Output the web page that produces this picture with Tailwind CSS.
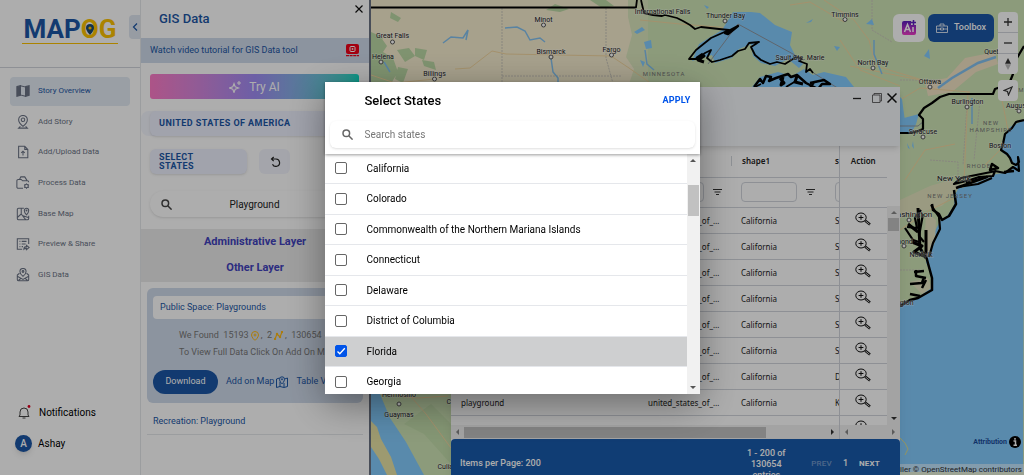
<!DOCTYPE html>
<html lang="en">
<head>
    <meta charset="UTF-8">
    <meta name="viewport" content="width=device-width, initial-scale=1.0">
    <title>MAPOG - GIS Data</title>
    <script src="https://cdn.jsdelivr.net/npm/@tailwindcss/browser@4"></script>
</head>
<body class="h-screen overflow-hidden bg-white font-['Roboto',sans-serif] text-[#222]">
    <div class="flex h-full">

        <!-- Sidebar -->
        <aside class="relative flex w-[140px] shrink-0 flex-col">
            <div class="flex h-[68px] items-start justify-center border-b border-gray-300 pt-[14px]">
                <div class="relative h-[30px] border-b border-[#fcc200] px-[2px] text-[26px] leading-[30px] font-bold">
                    <span class="text-[#1b56a5]">MAP</span><span class="text-[#fcc200]">OG</span>
                    <svg class="absolute top-[10px] left-[64px] h-3 w-2" viewBox="0 0 8 12"><path d="M4 0a4 4 0 0 0-4 4c0 3 4 7 4 7s4-4 4-7a4 4 0 0 0-4-4z" fill="#1b4a70"/><circle cx="4" cy="4" r="1.6" fill="#fcc200"/></svg>
                </div>
            </div>
            <button class="absolute top-[15px] right-0 flex h-6 w-[11px] items-center justify-center rounded-l bg-[#dfe6f0]" aria-label="Collapse">
                <svg class="h-2 w-[6px]" viewBox="0 0 6 8" fill="none" stroke="#1b56a5" stroke-width="1.2"><path d="M5 .5 1.500 4 5 7.500"/></svg>
            </button>
            <nav id="nav" class="mt-2 grid h-[214px] grid-rows-7 px-[10px]"></nav>
            <div class="mt-auto flex flex-col gap-3 pb-[23px] pl-[15px] text-[10px] text-black">
                <a href="#" class="flex h-5 items-center gap-[7px]">
                    <svg class="h-4 w-[17px]" viewBox="0 0 17 16" fill="none" stroke="#444" stroke-width="1"><path d="M5 11V8a4 4 0 0 1 8 0v3l1 1.500H4zM7.500 14h3"/><circle cx="14" cy="2.500" r="1.400" fill="#e00020" stroke="none"/></svg>
                    Notifications
                </a>
                <a href="#" class="flex h-[18px] items-center gap-[6px]">
                    <span class="flex size-[17px] items-center justify-center rounded-full bg-[#1b56a5] font-medium text-white shadow-md">A</span>
                    Ashay
                </a>
            </div>
        </aside>

        <!-- GIS data panel -->
        <section class="relative w-[231px] shrink-0 border-r-2 border-l border-l-gray-200 border-r-gray-500 text-[#1b56a5]">
            <button class="absolute top-[3px] right-1 flex size-3 items-center justify-center" aria-label="Close">
                <svg class="size-2" viewBox="0 0 8 8" stroke="#111" stroke-width="1.200"><path d="M.5.5l7 7M7.500.5l-7 7"/></svg>
            </button>
            <h1 class="flex h-[38px] items-center pl-[18px] text-[13px] font-medium">GIS Data</h1>
            <div class="flex h-[25px] items-center justify-between bg-[#cfdaea] pr-[10px] pl-[9px] text-[9px]">
                Watch video tutorial for GIS Data tool
                <svg class="h-[13px] w-[13px]" viewBox="0 0 13 13"><rect width="13" height="10" rx="2" fill="#f00018"/><rect x="4" y="2.500" width="5" height="5" rx="1" fill="none" stroke="#fff"/><path d="M5.800 3.800l2 1.200-2 1.200z" fill="#fff"/><path d="M0 11.700h13" stroke="#f00018" stroke-width="1.300" stroke-dasharray="3 .6"/></svg>
            </div>
            <div class="pt-[11px] pr-[10px] pl-[9px]">
                <button class="flex h-[25px] w-full items-center justify-center gap-2 rounded-[3px] bg-linear-to-r from-[#ff7cc8] via-[#a08cf5] to-[#00e0c8] text-[12px] text-white">
                    <svg class="size-3" viewBox="0 0 12 12" fill="none" stroke="#fff" stroke-width="1.100"><path d="M5 2.500 6.200 5.800 9.500 7 6.200 8.200 5 11.500 3.800 8.200.5 7 3.800 5.800zM10 0v4M8 2h4"/></svg>
                    Try AI
                </button>
            </div>
            <div class="mt-3 h-[25px] rounded-lg bg-[#f4f6fe] pl-[9px]">
                <button class="flex h-full w-full items-center rounded-md bg-[#edf0fe] pl-[9px] text-[9px] font-bold tracking-wider shadow">UNITED STATES OF AMERICA</button>
            </div>
            <div class="mt-[13px] flex h-[25px] gap-3 pl-[9px]">
                <button class="w-[97px] rounded-md bg-[#edf0fe] pr-9 pl-[9px] text-left text-[9px] leading-[9px] font-bold tracking-wider shadow">SELECT STATES</button>
                <button class="flex w-[31px] items-center justify-center rounded-md bg-[#f2f4fc]" aria-label="Reset">
                    <svg class="size-3" viewBox="0 0 12 12" fill="none" stroke="#222" stroke-width="1.200"><path d="M3 3h4a3.700 3.700 0 1 1-3.500 5.200M4.700 1 2.500 3 4.700 5.200"/></svg>
                </button>
            </div>
            <div class="mt-[17px] pr-[10px] pl-[9px]">
                <div class="relative h-[26px] rounded-full bg-white shadow">
                    <svg class="absolute top-2 left-[11px] size-[11px]" viewBox="0 0 11 11" fill="none" stroke="#444" stroke-width="1.500"><circle cx="4.300" cy="4.300" r="3.300"/><path d="M7 7l3.600 3.600"/></svg>
                    <input type="text" value="Playground" aria-label="Search data" class="h-full w-full rounded-full text-center text-[10px] text-[#222]">
                </div>
            </div>
            <div class="mt-3 h-[53px] bg-[#ebebeb] text-center text-[11px] leading-[26px] font-bold text-[#4142bd]">
                <h2>Administrative Layer</h2>
                <h2>Other Layer</h2>
            </div>
            <div class="mx-[6px] mt-[6px] h-[115px] rounded-md bg-[#cfdaea] px-[6px] pt-2 text-[9px]">
                <h3 class="flex h-[23px] items-center rounded bg-white pl-[7px]">Public Space: Playgrounds</h3>
                <div class="mt-2 pl-[26px] leading-[17px] whitespace-nowrap text-[#777]">
                    <p class="flex items-center">We Found&nbsp; 15193
                        <svg class="mx-[2px] h-[10px] w-2" viewBox="0 0 8 10" fill="none" stroke="#fdb813"><path d="M4 .5A3.500 3.500 0 0 0 .5 4C.5 6.500 4 9.500 4 9.500S7.500 6.500 7.500 4A3.500 3.500 0 0 0 4 .5zM4 2.500v3M2.500 4h3"/></svg>,&nbsp; 2
                        <svg class="mx-[2px] size-[9px]" viewBox="0 0 9 9" fill="none" stroke="#fdb813" stroke-width="1.200"><path d="M1 8l2-5 3 3 2-5"/><circle cx="1" cy="8" r=".6"/><circle cx="3" cy="3" r=".6"/><circle cx="6" cy="6" r=".6"/><circle cx="8" cy="1" r=".6"/></svg>,&nbsp; 130654
                        <svg class="ml-[2px] size-[9px]" viewBox="0 0 9 9" fill="none" stroke="#fdb813"><path d="M1 5l3-4 4 2-1 5z"/></svg>
                    </p>
                    <p>To View Full Data Click On Add On Map</p>
                </div>
                <div class="mt-[9px] flex h-6 items-center gap-2">
                    <button class="h-full w-[65px] rounded-full bg-[#1b56a5] text-white">Download</button>
                    <button class="flex items-center gap-[2px] whitespace-nowrap">Add on Map
                        <svg class="size-3" viewBox="0 0 12 12" fill="none" stroke="#1b56a5"><path d="M3.500 2 .5 3v8.500l3.500-1 4 1 3.500-1V2L8.500 3M4 6v4.500M8 7v4"/><path d="M6 8S3.500 5.500 3.500 3.300a2.500 2.500 0 0 1 5 0C8.500 5.500 6 8 6 8z"/><circle cx="6" cy="3.300" r=".6"/></svg>
                    </button>
                    <button class="whitespace-nowrap">Table View</button>
                </div>
            </div>
            <h3 class="mx-[6px] flex h-8 items-center border-b border-gray-200 pt-[6px] pl-[6px] text-[9px]">Recreation: Playground</h3>
        </section>

        <!-- Map -->
        <main class="relative min-w-0 flex-1 overflow-hidden bg-[#84ccfe]">
            <svg class="absolute inset-0 h-full w-full" viewBox="371 0 653 475" preserveAspectRatio="xMinYMin slice">
                <rect x="371" width="653" height="475" fill="#cfe5b6"/>
                <path d="M371 0H640V87H371z" fill="#f6edcf"/>
                <path d="M628 0h20v87h-20l6-18-8-12 6-22-4-18z" fill="#dbe6bd"/>
                <g fill="#bcd9a5">
                    <path d="M555 4l14 5-9 3-14-2zM371 32l9 4 7 10-4 6 10 6 5 14-6 10 4 5h-25zM397 50l12-2 6 8-10 6zM415 48l12 2-3 10-9-4zM422 60l12 2 2 8-12-4zM398 67l10 2-5 14-8-4zM391 12l10 6-3 4-8-4z"/>
                    <path d="M374 35l9 3-4 7-8-3zM590 0h16l8 6-12 2z"/>
                </g>
                <g fill="#f2e3c4">
                    <path d="M925 82l22-4 18-20 30-6 3 12-22 8-24 20-24 4z"/>
                    <path d="M900 200l30-14 20-6 10 6-18 20-42 12z" opacity=".6"/>
                </g>
                <!-- state lines and roads -->
                <g fill="none" stroke="#c9c6bb" stroke-width="1">
                    <path d="M502 8v79M502 76h120M606 8v50l8 29M900 80h40M930 160l28 2v30M967 105l-4 60M980 100l-6 60M900 270h22M872 0v30l20 12" stroke-dasharray="2 1"/>
                </g>
                <g fill="none" stroke="#f2d6a0" stroke-width="1">
                    <path d="M455 69l15-1 22-17 14 3 105 2 18 12 20 14M371 75l24 8 40-4M640 20l40 4 50 4M790 5l20-3 34 20M824 0l30 20 15 20 7 26 50 15M850 66l30 6 50 10M900 100l20-12 50 4M905 180l20-30 30-6M900 230l30-20 28-14M968 92l-4 90M1000 90l8 40M985 165l20-20M840 40l20 30 40 16"/>
                </g>
                <g fill="none" stroke="#84c2ef" stroke-width="1.500">
                    <path d="M443 43l8-6 12 1 5-8-2 10M505 28l12-1 8 4 5 9 10-2 5 4M551 58l2 14 5 6v9M645 50l2 14 7 6M874 40v14l8 20M384 62l6 10M972 98v26"/>
                    <path d="M938 88l14-10 26-15 18-6" stroke-width="2.500"/>
                </g>
                <g fill="#84ccfe">
                    <path d="M634 32l8-5 3 3-8 4zM644 42l7-2 1 8-6 1zM640 60l5 2-2 5zM704 5l5 2-2 2zM806 23l7-4-2 3zM866 24l6-5 2 6zM914 22l5 3-2 4zM924 56l5-7 1 10zM834 46l6 1-3 4zM907 143l3 6-2-1zM913 141l1 8-2-3z"/>
                    <path d="M722 30l11-18h18l9 1 15 12 17 7-2 13 5 10 8 9-4 4-11-9-13 7-14-3-8-7-2-12 8-3-20 8-7 9-17 5-3-8-20 6 7-17z"/>
                    <path d="M752 87l8-10 18-5 14 4 12-7 9 6 11-3 22 5 8 10h20l8 10 12-6 8 8 4 30-42 8z"/>
                    <path d="M900 119l19-5-3 10-4 8-12 1z"/>
                    <path d="M1024 120l-14 7-7 13-1 12 8 6 5 7-5 7-20 3-30 10-5 10-1 10-6 10-8 6-6 12-7 17-1 12 5 12 1 12-13 12-10 2-10 4v168h124z"/>
                </g>
                <path d="M960 184l35-11-4 4-29 11zM926 212l10 8-1 22-8 14-2-24zM910 282l18-4 4 10-10 6z" fill="#e7e5c3"/>
                <path d="M738 24l66 36M738 24l-30 40M812 72l40 25M900 126h18l6-5" fill="none" stroke="#8d96a0"/>
                <!-- places -->
                <g fill="#fff" stroke="#555">
                    <circle cx="392.500" cy="42" r="2"/><circle cx="381" cy="62" r="2"/><circle cx="434.500" cy="79" r="2"/><circle cx="543.500" cy="25" r="2"/><circle cx="551" cy="57" r="2"/><circle cx="611.500" cy="55" r="2"/><circle cx="725" cy="21" r="2"/><circle cx="845" cy="19.500" r="2"/><circle cx="873" cy="68" r="2"/><circle cx="930" cy="87" r="2"/><circle cx="967" cy="107" r="2"/><circle cx="923" cy="137" r="2"/><circle cx="909" cy="220" r="2"/><circle cx="904" cy="246" r="2"/><circle cx="1019" cy="111" r="2"/>
                </g>
                <!-- coast and country outline -->
                <g fill="none" stroke="#000" stroke-width="1.800" stroke-linejoin="round">
                    <path d="M371 7.500h265l1-8M641 0l3 13 9 2 9 1 3-1 12 3 6 3 7 4 5 4 6-2 18 2 10 1-18 8-15 12-7 9 8 0 8-6 6-3-4 8 5 4 8-2 12-4 6-5 7-2 4-6 10-1-8 5 4 8 6 5 9 4 7-2 8 2 11-7 6 2-3 2 8 3-1 8 4-3 3 4"/>
                    <path d="M725 33l13-7-10 8z" fill="#000" stroke-width="2.500"/>
                    <path d="M703 54l-6 4 7-2-6 4 6 2" stroke-width="3"/>
                    <path d="M754 87l6-8 3 4 3-7 5 1-2 4 7-3 12-4 3 3 6-2 9 8 12 6 4-5h8l-6-4-14 3" stroke-width="2.500"/>
                    <path d="M780 78l4 5-3 2 2-8M797 76l-2 6 8 2" stroke-width="3"/>
                    <path d="M755 87l6-3M786 87l10-6M810 87l4-4"/>
                    <path d="M900 133h11l7-2 5-2 0-10-4-4 5-7 8-5 8-6 9-3h44l2-5 14-5 4-10-2-6 13-22" stroke-width="2.200"/>
                    <path d="M1024 120l-8 2-4 6-7 6-2 10-2 6 6 4 3 4 2 5 4 2 3-3-1-5 1 14-6-4-8 6-10-2-2 5-14 1-9 3-16 4 7-6 20-4 15-3" stroke-width="2.200"/>
                    <path d="M992 164l6 4-8 2zM1004 172l10-1M956 188l31-11-21 6M954 190l2 14-7 12-7 4-3-6-6-4-1-6" stroke-width="2.500"/>
                    <path d="M958 187l20-3 14-6M921 210l-6 8 2 10-10-1M923 214l-4 22 5 6M905 228l8 12 6 2M931 205l8 12 1 12-7 14-4 14" stroke-width="2.200"/>
                    <path d="M918 208l2 40 6 10M908 224l10 8M912 242l10 4-8 6 10 4M926 230v24" stroke-width="3"/>
                    <path d="M926 256l6 22 0 12-14 8-8 2-10 6M914 272l10-1M916 270v6l10 2M910 284l12-1 2-6M910 294l10 2M926 280l-4 8" stroke-width="2.500"/>
                </g>
                <!-- Gulf of California corner -->
                <path d="M371 394h9l10 24 16 24 18 33h-53z" fill="#84ccfe"/>
                <path d="M371 421l6 6 4 12 10 18 6 18h-10l-8-16-8-12z" fill="#e8e3a5"/>
                <path d="M404 424l20 10 27 30v-40l-20-20z" fill="#bcd9a5" opacity=".6"/>
                <path d="M412 398l14 16 25 34M396 396l22 2 30-2" fill="none" stroke="#f2d6a0"/>
                <path d="M899 437l6 6 3 6-3 6" fill="none" stroke="#dcdd90"/>
                <circle cx="399" cy="404" r="2" fill="#fff" stroke="#555"/>
                <g font-size="7" fill="#222" stroke="#fff" stroke-opacity=".5" stroke-width="1" paint-order="stroke" text-anchor="middle">
                    <text x="392.500" y="38">Great Falls</text>
                    <text x="383" y="59">Helena</text>
                    <text x="434.500" y="76">Billings</text>
                    <text x="543.500" y="22">Minot</text>
                    <text x="551" y="54">Bismarck</text>
                    <text x="611.500" y="52">Fargo</text>
                    <text x="662.500" y="14">International Falls</text>
                    <text x="725.500" y="18">Thunder Bay</text>
                    <text x="800" y="60">Sault Ste. Marie</text>
                    <text x="845" y="17">Timmins</text>
                    <text x="873" y="65">North Bay</text>
                    <text x="930" y="84">Ottawa</text>
                    <text x="996" y="54">Quebec</text>
                    <text x="967.500" y="104">Burlington</text>
                    <text x="1019" y="108">Augusta</text>
                    <text x="923" y="134">Syracuse</text>
                    <text x="1000" y="148">Boston</text>
                    <text x="954" y="181" font-size="8">New York</text>
                    <text x="911" y="217" font-size="8">Washington</text>
                    <text x="897" y="244">Richmond</text>
                    <text x="921" y="257">Norfolk</text>
                    <text x="896" y="305">Wilmington</text>
                    <text x="399" y="397">Hermosillo</text>
                    <text x="399" y="417">Guaymas</text>
                    <text x="463" y="404">Chihuahua</text>
                    <text x="451" y="469">Culiacán</text>
                </g>
                <g font-size="6" fill="#777" letter-spacing="1" text-anchor="middle">
                    <text x="664" y="76">MINNESOTA</text>
                    <text x="991" y="125">NEW</text>
                    <text x="991" y="132">HAMPSHIRE</text>
                    <text x="979" y="168">RHODE</text>
                    <text x="950" y="198">NEW JERSEY</text>
                    <text x="1030" y="92">MAINE</text>
                </g>
            </svg>

            <!-- Map controls -->
            <div class="absolute top-3 right-[6px] flex items-start gap-1">
                <div class="mt-[2px] flex h-7 gap-[3px]">
                    <button class="flex w-8 items-center justify-center rounded-md bg-white" aria-label="AI">
                        <svg class="size-4" viewBox="0 0 16 16"><defs><linearGradient id="ai" x1="0" y1="0" x2="0" y2="1"><stop offset="0" stop-color="#5b1fc0"/><stop offset="1" stop-color="#f03cc8"/></linearGradient></defs><path d="M3 1h7v4h5v8a2 2 0 0 1-2 2H3a2 2 0 0 1-2-2V3a2 2 0 0 1 2-2z" fill="url(#ai)"/><path d="M3.500 12 6.500 4.500 9.500 12M4.500 9.500h4M12 7v5" fill="none" stroke="#fff" stroke-width="1.500"/><path d="M12.500 0v5M10 2.500h5" stroke="#5b1fc0" stroke-width="1.500"/></svg>
                    </button>
                    <button class="flex w-[66px] items-center justify-center gap-[6px] rounded-md bg-[#1b56a5] text-[9px] font-medium text-white">
                        <svg class="h-[10px] w-3" viewBox="0 0 12 10" fill="none" stroke="#fff" stroke-width=".8"><path d="M.5 3h11v6.500H.5zM4 3V1h4v2M.5 6h4M7.500 6h4M4.500 5h3v2h-3z"/></svg>
                        Toolbox
                    </button>
                </div>
                <div class="flex w-5 flex-col gap-[6px]">
                    <div class="rounded-sm bg-white">
                        <button class="flex h-[21px] w-full items-center justify-center border-b border-gray-300" aria-label="Zoom in"><svg class="size-2" viewBox="0 0 8 8" stroke="#333" stroke-width="1.300"><path d="M0 4h8M4 0v8"/></svg></button>
                        <button class="flex h-[21px] w-full items-center justify-center border-b border-gray-300" aria-label="Zoom out"><svg class="size-2" viewBox="0 0 8 8" stroke="#333" stroke-width="1.300"><path d="M0 4h8"/></svg></button>
                        <button class="flex h-5 w-full items-center justify-center" aria-label="Reset north"><svg class="h-3 w-[6px]" viewBox="0 0 6 12"><path d="M0 5.700 3 0l3 5.700z" fill="#333"/><path d="M0 6.300 3 12l3-5.700z" fill="#bbb"/></svg></button>
                    </div>
                    <button class="flex h-[21px] items-center justify-center rounded-sm bg-white" aria-label="Locate"><svg class="size-[10px]" viewBox="0 0 10 10" fill="none" stroke="#333" stroke-width="1.200"><path d="M9 1 1 4.500l3.500 1L5.500 9z"/></svg></button>
                </div>
            </div>
            <a href="#" class="absolute right-[3px] bottom-[27px] flex items-center gap-[2px] text-[7px] font-bold text-[#1b4a9a]">Attribution
                <svg class="size-3" viewBox="0 0 12 12"><circle cx="6" cy="6" r="6"/><path d="M6 2v1.800M4.500 5H6.500v4M4.500 9.300h3.500" fill="none" stroke="#fff" stroke-width="1.500"/></svg>
            </a>
            <div class="absolute right-0 bottom-0 h-[11px] bg-white/50 pr-[2px] text-[8px] leading-[11px] text-[#333]">© MapTiler © OpenStreetMap contributors</div>

            <!-- Attribute table window -->
            <div class="absolute top-[87px] right-[124px] -bottom-[14px] left-[80px] flex flex-col bg-white shadow-lg">
                <div class="relative flex h-[59px] shrink-0 justify-end gap-[5px] bg-[#f4f6fa] pt-[6px] pr-[3px] shadow-md">
                    <button class="size-[10px]" aria-label="Minimize"><svg viewBox="0 0 10 10" stroke="#222" stroke-width="1.300"><path d="M1 5.500h8"/></svg></button>
                    <button class="ml-[5px] size-[10px]" aria-label="Restore"><svg viewBox="0 0 10 10" fill="none" stroke="#444" stroke-width=".8"><path d="M.5 2h7.500v7.500H.5zM2 2V.5h7.500V8H8"/></svg></button>
                    <button class="size-[10px]" aria-label="Close"><svg viewBox="0 0 10 10" stroke="#111" stroke-width="1.500"><path d="M.5.5l9 9M9.500.5l-9 9"/></svg></button>
                </div>
                <div class="flex min-h-0 flex-1 font-['Noto_Sans',sans-serif] text-[8px] text-[#222]">
                    <div class="flex-1 overflow-hidden">
                        <table class="w-full table-fixed border-collapse">
                            <colgroup><col><col class="w-[93px]"><col class="w-[94px]"><col class="w-[14px]"><col class="w-[48px]"></colgroup>
                            <thead>
                                <tr class="h-[31px] border-b border-gray-300 text-left">
                                    <th></th>
                                    <th></th>
                                    <th class="font-semibold"><span class="block border-l border-gray-300 pl-[10px] leading-[10px]">shape1</span></th>
                                    <th class="overflow-hidden border-r border-gray-300 pl-[10px] font-semibold">s</th>
                                    <th class="text-center font-semibold">Action</th>
                                </tr>
                                <tr id="filters" class="h-[30px] border-b border-gray-300"></tr>
                            </thead>
                            <tbody id="rows"></tbody>
                        </table>
                    </div>
                    <div class="mt-[60px] flex w-[13px] flex-col items-center justify-between bg-[#f1f1f1] py-[5px]">
                        <span class="flex flex-col items-center gap-1">
                            <svg class="h-[3px] w-[6px]" viewBox="0 0 6 3"><path d="M0 3 3 0l3 3z" fill="#888"/></svg>
                            <i class="h-[13px] w-[11px] bg-[#c1c1c1]"></i>
                        </span>
                        <svg class="h-[3px] w-[6px]" viewBox="0 0 6 3"><path d="M0 0l3 3 3-3z" fill="#333"/></svg>
                    </div>
                </div>
                <div class="flex h-[14px] shrink-0 items-center bg-[#f1f1f1]">
                    <div class="flex h-full flex-1 items-center justify-between border-r border-gray-300 px-[5px]">
                        <svg class="h-[6px] w-[3px]" viewBox="0 0 3 6"><path d="M3 0 0 3l3 3z" fill="#888"/></svg>
                        <i class="mr-auto ml-[5px] h-[11px] w-4/5 bg-[#c1c1c1]"></i>
                        <svg class="h-[6px] w-[3px]" viewBox="0 0 3 6"><path d="M0 0l3 3-3 3z" fill="#333"/></svg>
                    </div>
                    <div class="flex w-[60px] justify-between px-[5px]">
                        <svg class="h-[6px] w-[3px]" viewBox="0 0 3 6"><path d="M3 0 0 3l3 3z" fill="#888"/></svg>
                        <svg class="h-[6px] w-[3px]" viewBox="0 0 3 6"><path d="M0 0l3 3-3 3z" fill="#888"/></svg>
                    </div>
                </div>
                <footer class="flex h-[50px] shrink-0 items-center rounded-t bg-[#195aab] pr-5 pl-[9px] text-[9px] font-medium text-white">
                    <span class="mr-auto">Items per Page: 200</span>
                    <span class="w-11 text-center leading-[11px]">1 - 200 of 130654 entries</span>
                    <button class="ml-[23px] text-[8px] tracking-wide text-white/40">PREV</button>
                    <span class="mx-[11px]">1</span>
                    <button class="text-[8px] font-bold tracking-wide">NEXT</button>
                </footer>
            </div>
        </main>
    </div>

    <!-- State picker -->
    <div class="fixed inset-0 flex items-center justify-center bg-black/32">
        <div role="dialog" aria-labelledby="pickerTitle" class="flex h-[312px] w-[375px] flex-col bg-white shadow-[0_10px_36px_rgba(0,0,0,0.4)]">
            <div class="relative px-[5px] pb-[6px] shadow-[0_1px_3px_rgba(0,0,0,0.4)]">
                <div class="flex h-[39px] items-center justify-between pr-1 pl-[35px]">
                    <h2 id="pickerTitle" class="text-[13px] font-medium text-black">Select States</h2>
                    <button class="text-[9px] font-bold tracking-wide text-[#0054e9]">APPLY</button>
                </div>
                <label class="flex h-[27px] items-center gap-3 rounded-md bg-white pl-3 shadow">
                    <svg class="size-[11px]" viewBox="0 0 11 11" fill="none" stroke="#666" stroke-width="1.500"><circle cx="4.300" cy="4.300" r="3.300"/><path d="M7 7l3.600 3.600"/></svg>
                    <input type="text" placeholder="Search states" aria-label="Search states" class="flex-1 text-[10px] outline-none placeholder:text-[#777]">
                </label>
            </div>
            <div class="flex min-h-0 flex-1 overflow-hidden">
                <ul id="states" class="grid h-[244px] flex-1 grid-rows-8 text-[10px] text-black"></ul>
                <div class="flex w-[13px] flex-col items-center bg-[#f1f1f1] py-[5px]">
                    <svg class="h-[3px] w-[6px]" viewBox="0 0 6 3"><path d="M0 3 3 0l3 3z" fill="#555"/></svg>
                    <i class="mt-[23px] mb-auto h-[31px] w-[11px] bg-[#c1c1c1]"></i>
                    <svg class="h-[3px] w-[6px]" viewBox="0 0 6 3"><path d="M0 0l3 3 3-3z" fill="#555"/></svg>
                </div>
            </div>
        </div>
    </div>

    <script>
        const navItems = [
            ['Story Overview', '<path d="M1 3l4-1v11l-4 1zM11 3l4-1v11l-4 1z" fill="#6b7385"/><path d="M5 2l6 1.500V14l-6-1.500z"/>'],
            ['Add Story', '<path d="M8 13S3 9 3 5.500a5 5 0 0 1 10 0C13 9 8 13 8 13zM5 13l-2 2h10l-2-2"/><circle cx="8" cy="5.500" r="2"/>'],
            ['Add/Upload Data', '<path d="M3 1.500h7L13.500 5v9.500H3zM10 1.500V5h3.500M8 12V7M6 9l2-2 2 2"/>'],
            ['Process Data', '<path d="M8 14H2.500A1.500 1.500 0 0 1 1 12.500v-7A1.500 1.500 0 0 1 2.500 4H6l1.500 1.500H13A1.500 1.500 0 0 1 14.500 7M4 4l1.500-3H10l2.500 4"/><circle cx="12" cy="11.500" r="2"/><path d="M12 8.500v1M12 13.500v1M9.300 10l1 .6M13.700 12.500l1 .6M14.700 10l-1 .6M10.300 12.500l-1 .6"/>'],
            ['Base Map', '<path d="M9 1.500H3A1.500 1.500 0 0 0 1.500 3v10A1.500 1.500 0 0 0 3 14.500h10a1.500 1.500 0 0 0 1.500-1.500v-3M6 1.500V8l-4.500 4M6 8l5 6.500M8 10l6 2"/><path d="M12 9S9.500 6.500 9.500 4a2.500 2.500 0 0 1 5 0C14.500 6.500 12 9 12 9z"/><circle cx="12" cy="4" r=".5"/>'],
            ['Preview &amp; Share', '<path d="M7 14H1.500V2h13v6M4 5h1M4 8h1M4 11h1M6.500 5H12M6.500 8H11M6.500 11H8M9 14c0-2 1.500-3 3-3V9.500l3 2.500-3 2.500V13c-1 0-2 0-3 1z"/>'],
            ['GIS Data', '<path d="M4 6 1.500 8v5A1.500 1.500 0 0 0 3 14.500h10a1.500 1.500 0 0 0 1.500-1.500V8L12 6M1.500 9.500 8 13l6.500-3.500M3 14l3-2.500M13 14l-3-2.500"/><path d="M8 9.500S4.500 7 4.500 4a3.500 3.500 0 0 1 7 0C11.500 7 8 9.500 8 9.500z"/><circle cx="8" cy="4" r="1"/>']
        ];
        const states = ['California', 'Colorado', 'Commonwealth of the Northern Mariana Islands', 'Connecticut', 'Delaware', 'District of Columbia', 'Florida', 'Georgia'];
        const counties = ['S', 'S', 'S', 'S', 'S', 'S', 'D', 'K'];

        document.getElementById('nav').innerHTML = navItems.map(([label, icon], index) => `
            <a href="#" class="my-[1px] flex items-center gap-2 rounded pl-[6px] text-[8px] ${index === 0 ? 'bg-[#e3eaf3] text-[#1b56a5]' : 'text-[#6b7385]'}">
                <svg class="size-[14px]" viewBox="0 0 16 16" fill="none" stroke="#6b7385" stroke-width="1.200">${icon}</svg>${label}
            </a>
        `).join('');

        document.getElementById('states').innerHTML = states.map(name => `
            <li class="border-b border-gray-200 ${name === 'Florida' ? 'bg-[#cecfd0]' : ''}">
                <label class="flex h-full items-center gap-5 pl-[10px]">
                    <span class="grid size-3 *:col-start-1 *:row-start-1">
                        <input type="checkbox" ${name === 'Florida' ? 'checked' : ''} class="peer size-3 appearance-none rounded-xs border border-[#666] checked:border-[#0054e9] checked:bg-[#0054e9]">
                        <svg class="invisible size-3 peer-checked:visible" viewBox="0 0 12 12" fill="none" stroke="#fff" stroke-width="1.300"><path d="M2.500 6.500 4.800 8.800 9.800 3.300"/></svg>
                    </span>
                    ${name}
                </label>
            </li>
        `).join('');

        const filter = `
            <td class="overflow-hidden"><div class="flex items-center gap-[9px] pl-[10px]">
                <input type="text" aria-label="Filter" class="h-5 w-14 min-w-0 shrink-0 rounded-sm border border-gray-300">
                <svg class="h-[7px] w-[9px] shrink-0" viewBox="0 0 9 7" stroke="#333"><path d="M0 .5h9M1.500 3h6M3 5.500h3"/></svg>
            </div></td>`;
        document.getElementById('filters').innerHTML = filter + filter + filter +
            '<td class="overflow-hidden border-r border-gray-300 pl-[10px]"><div class="h-5 w-14 rounded-sm border border-gray-300"></div></td><td></td>';

        const zoomButton = `
            <button class="mx-auto block" aria-label="Zoom to row">
                <svg class="h-[14px] w-4" viewBox="0 0 16 14" fill="none" stroke="#111"><ellipse cx="6" cy="5.500" rx="5.200" ry="4.500"/><path d="M6 3.200v4.600M3.600 5.500h4.800"/><path d="M10 8.500l5 4" stroke-width="2.400"/><path d="M10.500 9l4 3.200" stroke="#fff" stroke-width=".8"/></svg>
            </button>`;
        document.getElementById('rows').innerHTML = counties.map(county => `
            <tr class="h-[26px] border-b border-gray-300">
                <td class="pt-[2px] pl-[10px]">playground</td>
                <td class="truncate pt-[2px] pr-2 pl-[10px]">united_states_of_america</td>
                <td class="pt-[2px] pl-[10px]">California</td>
                <td class="overflow-hidden border-r border-gray-300 pt-[2px] pl-[10px]">${county}</td>
                <td class="pb-[2px]">${zoomButton}</td>
            </tr>
        `).join('') + `<tr class="h-[26px]"><td></td><td></td><td></td><td class="border-r border-gray-300"></td><td class="pb-[2px]">${zoomButton}</td></tr>`;
    </script>
</body>
</html>
